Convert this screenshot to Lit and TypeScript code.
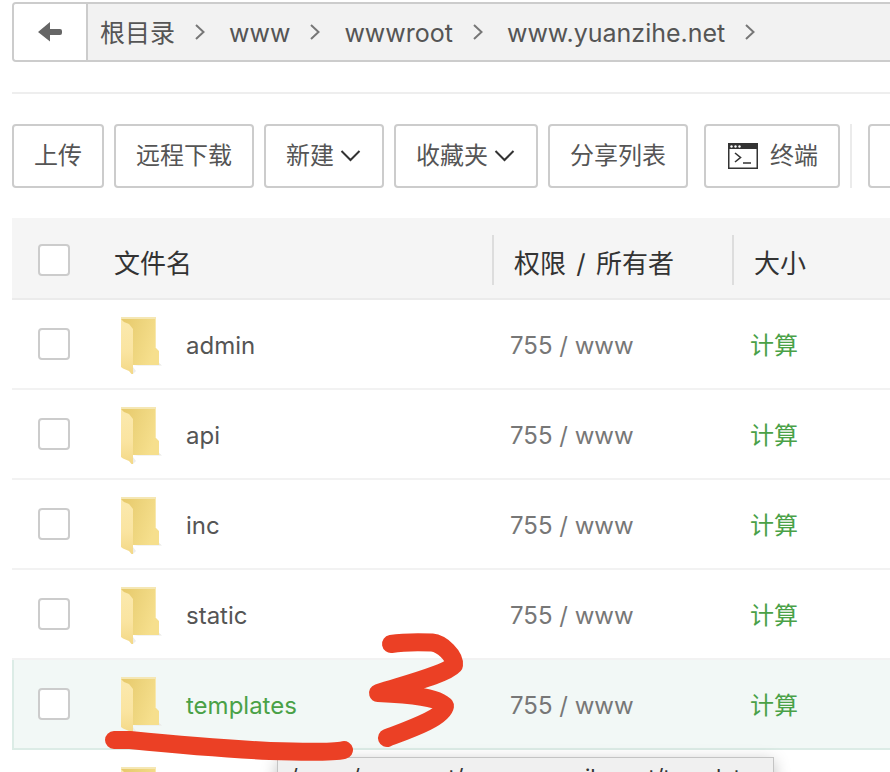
import { LitElement, html, css, svg, nothing } from "lit";
import { customElement } from "lit/decorators.js";
import { classMap } from "lit/directives/class-map.js";

interface Entry {
  name: string;
  owner: string;
  hovered?: boolean;
}

const CRUMBS = ["根目录", "www", "wwwroot", "www.yuanzihe.net"];

const ENTRIES: Entry[] = [
  { name: "admin", owner: "755 / www" },
  { name: "api", owner: "755 / www" },
  { name: "inc", owner: "755 / www" },
  { name: "static", owner: "755 / www" },
  { name: "templates", owner: "755 / www", hovered: true },
  { name: "", owner: "" },
];

const folderIcon = html`
  <svg class="folder" viewBox="0 0 42 58" aria-hidden="true">
    <defs>
      <linearGradient id="back" x1="0" y1="0" x2="1" y2="0.4">
        <stop offset="0" stop-color="#e6c869" />
        <stop offset="0.5" stop-color="#edd47c" />
        <stop offset="1" stop-color="#f6df8d" />
      </linearGradient>
      <linearGradient id="front" x1="0" y1="0" x2="0" y2="1">
        <stop offset="0" stop-color="#fbe9ae" />
        <stop offset="0.6" stop-color="#fae4a0" />
        <stop offset="1" stop-color="#f3d887" />
      </linearGradient>
    </defs>
    <path d="M13 48.500H42L39 46Z" fill="#e8e8e6" />
    <path d="M1 0H36V31L39 34V48H13L1 40Z" fill="url(#back)" />
    <path d="M1 0H36V2H1Z" fill="#f5e7b4" />
    <path d="M35 2H36V31H35Z" fill="#f8e8ae" />
    <path d="M13 50V57L16 54Z" fill="#ececea" />
    <path d="M1 2L4 5L9 7L13 12V57H11.500L9 54L3 51.500L1 50Z" fill="url(#front)" />
  </svg>
`;

const crumbArrow = html`
  <svg class="crumb-arrow" viewBox="0 0 10 16" aria-hidden="true">
    <path d="M1 1L8.500 8L1 15" fill="none" stroke="#777" stroke-width="2" />
  </svg>
`;

const caret = html`
  <svg class="caret" viewBox="0 0 22 16" aria-hidden="true">
    <path d="M1.500 3L10.500 12L19.500 3" fill="none" stroke="#333" stroke-width="2" />
  </svg>
`;

const terminalIcon = html`
  <svg class="terminal" viewBox="0 0 32 28" aria-hidden="true">
    <path d="M2 1H32V27H2Z" fill="#333" />
    <path d="M3.500 7H30.500V25.500H3.500Z" fill="#fff" />
    ${[5.5, 9.5, 13.5].map((x) => svg`<circle cx=${x} cy="4.500" r="1.200" fill="#fff" />`)}
    <path d="M9 11L14.500 15.500L9 20M17 21H25" fill="none" stroke="#333" stroke-width="1.600" />
  </svg>
`;

@customElement("app-root")
export class AppRoot extends LitElement {
  static styles = css`
    :host {
      display: block;
      position: relative;
      box-sizing: border-box;
      height: 100vh;
      overflow: hidden;
      padding: 2px 0 0 12px;
      background: #fff;
      color: #555;
      font: 24px/32px Inter, "Noto Sans CJK SC", sans-serif;
    }
    * {
      box-sizing: border-box;
    }
    button {
      font: inherit;
      color: inherit;
      background: #fff;
      cursor: pointer;
    }
    a {
      color: inherit;
      text-decoration: none;
    }
    svg {
      display: block;
      flex: none;
    }
    .path {
      display: flex;
      height: 60px;
      border: 2px solid #ccc;
      border-right: 0;
      border-radius: 4px 0 0 4px;
      background: #f2f2f2;
      overflow: hidden;
    }
    .back {
      display: flex;
      flex: none;
      align-items: center;
      justify-content: center;
      width: 74px;
      padding: 0;
      border: 0;
      border-right: 2px solid #ccc;
    }
    .back svg {
      width: 24px;
      height: 20px;
    }
    .crumbs {
      display: flex;
      align-items: center;
      gap: 24px;
      margin: 0;
      padding: 0 0 0 12px;
      font-size: 25px;
      list-style: none;
      white-space: nowrap;
    }
    .crumbs li {
      display: flex;
      align-items: center;
      gap: 20px;
    }
    .crumbs a {
      padding-top: 2px;
    }
    .crumb-arrow {
      width: 10px;
      height: 16px;
    }
    .toolbar {
      display: flex;
      gap: 10px;
      margin-top: 30px;
      padding: 30px 0;
      border-top: 2px solid #eee;
    }
    .tool {
      display: flex;
      flex: none;
      align-items: center;
      height: 64px;
      padding: 0 20px;
      border: 2px solid #ccc;
      border-radius: 4px;
      white-space: nowrap;
    }
    .tool.menu {
      gap: 6px;
    }
    .tool.shell {
      gap: 12px;
      margin-left: 6px;
    }
    .tool.more {
      width: 92px;
      margin-left: 6px;
    }
    .caret {
      width: 22px;
      height: 16px;
    }
    .terminal {
      width: 32px;
      height: 28px;
    }
    .rule {
      flex: none;
      width: 2px;
      background: #ebebeb;
    }
    table {
      width: 100%;
      table-layout: fixed;
      border-collapse: separate;
      border-spacing: 0;
    }
    .col-check {
      width: 86px;
    }
    .col-name {
      width: 396px;
    }
    .col-owner {
      width: 240px;
    }
    th {
      height: 82px;
      padding: 12px 0 0 16px;
      border-bottom: 2px solid #ebebeb;
      background: linear-gradient(#ddd, #ddd) right 17px / 2px 50px no-repeat #f5f5f5;
      color: #333;
      font-size: 26px;
      font-weight: 400;
      text-align: left;
    }
    th:first-child,
    th:last-child {
      background: #f5f5f5;
    }
    th:nth-child(n + 3) {
      padding-left: 20px;
    }
    .slash {
      padding: 0 3px;
    }
    td {
      height: 90px;
      padding: 4px 0 0 16px;
      border-bottom: 2px solid #f2f2f2;
    }
    td:first-child {
      padding: 0 0 0 26px;
    }
    th:first-child {
      padding: 4px 0 0 26px;
    }
    .entry {
      display: flex;
      align-items: center;
      gap: 24px;
      padding-left: 6px;
    }
    .folder {
      width: 42px;
      height: 58px;
    }
    .owner {
      color: #777;
    }
    .size {
      color: #4aa147;
    }
    .hovered td {
      background: #f2f8f6;
      border-bottom-color: #dcece6;
    }
    .hovered td:first-child {
      padding-left: 24px;
      border-left: 2px solid #dcece6;
    }
    .hovered .entry {
      color: #4aa147;
    }
    input {
      display: block;
      appearance: none;
      width: 32px;
      height: 32px;
      margin: 0;
      border: 2px solid #ccc;
      border-radius: 4px;
      background: #fff;
    }
    .tip {
      position: absolute;
      left: 277px;
      top: 757px;
      padding: 3px 8px 6px 12px;
      border: 1px solid #c4c4c4;
      background: #f0f0f0;
      box-shadow: 0 4px 16px rgba(0, 0, 0, 0.25);
      color: #333;
      font-size: 22px;
      white-space: nowrap;
    }
    .marks {
      position: absolute;
      left: 0;
      top: 620px;
      width: 500px;
      height: 152px;
      pointer-events: none;
    }
  `;

  private row(entry: Entry) {
    return html`
      <tr class=${classMap({ hovered: !!entry.hovered })}>
        <td><input type="checkbox" aria-label=${entry.name || nothing} /></td>
        <td><a class="entry" href="#">${folderIcon}${entry.name}</a></td>
        <td class="owner">${entry.owner}</td>
        <td class="size">${entry.name ? html`<a href="#">计算</a>` : nothing}</td>
      </tr>
    `;
  }

  render() {
    return html`
      <nav class="path">
        <button class="back" aria-label="返回">
          <svg viewBox="0 0 24 20" aria-hidden="true">
            <path d="M0 10L12 0V7H22Q24 7 24 9V11Q24 13 22 13H12V19.500Z" fill="#666" />
          </svg>
        </button>
        <ol class="crumbs">
          ${CRUMBS.map((name) => html`<li><a href="#">${name}</a>${crumbArrow}</li>`)}
        </ol>
      </nav>
      <div class="toolbar">
        <button class="tool">上传</button>
        <button class="tool">远程下载</button>
        <button class="tool menu">新建${caret}</button>
        <button class="tool menu">收藏夹${caret}</button>
        <button class="tool">分享列表</button>
        <button class="tool shell">${terminalIcon}终端</button>
        <span class="rule"></span>
        <button class="tool more" aria-label="更多"></button>
      </div>
      <table>
        <colgroup>
          <col class="col-check" />
          <col class="col-name" />
          <col class="col-owner" />
          <col />
        </colgroup>
        <thead>
          <tr>
            <th><input type="checkbox" aria-label="全选" /></th>
            <th>文件名</th>
            <th>权限 <span class="slash">/</span> 所有者</th>
            <th>大小</th>
          </tr>
        </thead>
        <tbody>
          ${ENTRIES.map((entry) => this.row(entry))}
        </tbody>
      </table>
      <div class="tip" role="tooltip">/www/wwwroot/www.yuanzihe.net/templates</div>
      <svg class="marks" viewBox="0 620 500 152" aria-hidden="true">
        <g fill="none" stroke="#eb4025" stroke-width="18" stroke-linecap="round" stroke-linejoin="round">
          <path d="M114 740H130C180 745 230 749 270 751C300 752 335 752 344 750" />
          <path
            d="M391 644C400 642.500 420 642 432 642.500C442 643.500 455 656 454 665C446 674 410 683 378 693C398 694 438 696 445 706C443 718 408 730 387 738"
          />
        </g>
      </svg>
    `;
  }
}
